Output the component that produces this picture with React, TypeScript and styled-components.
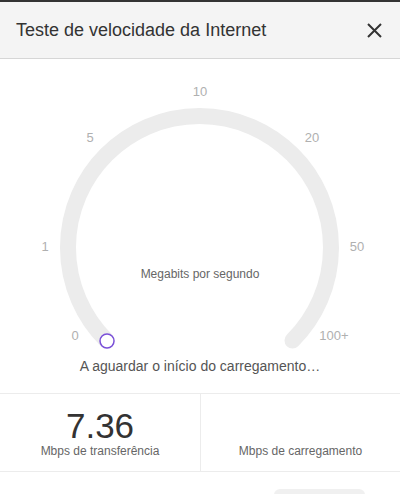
import React from "react";
import styled, { createGlobalStyle } from "styled-components";

const Global = createGlobalStyle`
  html, body { margin: 0; padding: 0; background: #ffffff; }
  body { font-family: "Liberation Sans", Arial, sans-serif; }
`;

const Page = styled.div`
  width: 400px;
  height: 494px;
  overflow: hidden;
  background: #fff;
  border-top: 2px solid #333333;
  box-sizing: border-box;
`;

const Header = styled.header`
  height: 56px;
  background: #f4f4f4;
  border-bottom: 1px solid #d6d6d6;
  display: flex;
  align-items: center;
  justify-content: space-between;
  padding: 0 18px 0 16px;
`;

const Title = styled.h1`
  margin: 0;
  font-size: 18px;
  font-weight: 400;
  color: #333;
`;

const CloseButton = styled.button`
  border: 0;
  background: transparent;
  padding: 0;
  width: 16px;
  height: 16px;
  display: flex;
  align-items: center;
  justify-content: center;
  cursor: pointer;
`;

const Gauge = styled.div`
  position: relative;
  height: 300px;
`;

const GaugeSvg = styled.svg`
  display: block;
`;

const Label = styled.span<{ $x: number; $y: number; $size?: number; $color?: string }>`
  position: absolute;
  left: ${(p) => p.$x}px;
  top: ${(p) => p.$y}px;
  transform: translate(-50%, -50%);
  font-size: ${(p) => p.$size ?? 13}px;
  color: ${(p) => p.$color ?? "#b0b0b0"};
  white-space: nowrap;
  line-height: 1;
`;

const Status = styled.div`
  height: 34px;
  font-size: 14px;
  color: #555;
  text-align: center;
  line-height: 14px;
  box-sizing: border-box;
`;

const Stats = styled.div`
  display: grid;
  grid-template-columns: 1fr 1fr;
  height: 79px;
  border-top: 1px solid #ececec;
  border-bottom: 1px solid #ececec;
  box-sizing: border-box;
`;

const Stat = styled.div<{ $divider?: boolean }>`
  display: flex;
  flex-direction: column;
  align-items: center;
  justify-content: flex-end;
  padding-bottom: 13px;
  border-left: ${(p) => (p.$divider ? "1px solid #ececec" : "none")};
`;

const Value = styled.div`
  font-size: 35px;
  color: #333;
  line-height: 32px;
`;

const Unit = styled.div`
  font-size: 12px;
  color: #666;
  line-height: 14px;
  margin-top: 2px;
`;

const Footer = styled.div`
  display: flex;
  justify-content: flex-end;
  padding: 17px 35px 0 0;
`;

const Action = styled.div`
  width: 91px;
  height: 30px;
  background: #f0f0f0;
  border-radius: 6px;
`;

const cx = 199.5;
const cy = 188.5;
const r = 131.5;
const d = r * Math.SQRT1_2;
const arc = `M ${cx - d} ${cy + d} A ${r} ${r} 0 1 1 ${cx + d} ${cy + d}`;

const ticks: { t: string; x: number; y: number }[] = [
  { t: "10", x: 200, y: 32 },
  { t: "5", x: 90, y: 78 },
  { t: "20", x: 312, y: 78 },
  { t: "1", x: 45, y: 187 },
  { t: "50", x: 357, y: 187 },
  { t: "0", x: 75, y: 276 },
  { t: "100+", x: 334, y: 276 },
];

export default function App() {
  return (
    <>
      <Global />
      <Page>
        <Header>
          <Title>Teste de velocidade da Internet</Title>
          <CloseButton aria-label="Fechar">
            <svg width="15" height="15" viewBox="0 0 15 15">
              <path d="M1 1 L14 14 M14 1 L1 14" stroke="#333" strokeWidth="2" />
            </svg>
          </CloseButton>
        </Header>
        <Gauge>
          <GaugeSvg width="400" height="300" viewBox="0 0 400 300">
            <path d={arc} fill="none" stroke="#ececec" strokeWidth="16" strokeLinecap="round" />
            <circle cx={cx - d + 0.5} cy={cy + d + 0.5} r="7" fill="#fff" stroke="#7a50d8" strokeWidth="1.5" />
          </GaugeSvg>
          {ticks.map((k) => (
            <Label key={k.t} $x={k.x} $y={k.y}>
              {k.t}
            </Label>
          ))}
          <Label $x={200} $y={215} $size={12} $color="#666">
            Megabits por segundo
          </Label>
        </Gauge>
        <Status>A aguardar o início do carregamento…</Status>
        <Stats>
          <Stat>
            <Value>7.36</Value>
            <Unit>Mbps de transferência</Unit>
          </Stat>
          <Stat $divider>
            <Unit>Mbps de carregamento</Unit>
          </Stat>
        </Stats>
        <Footer>
          <Action />
        </Footer>
      </Page>
    </>
  );
}
